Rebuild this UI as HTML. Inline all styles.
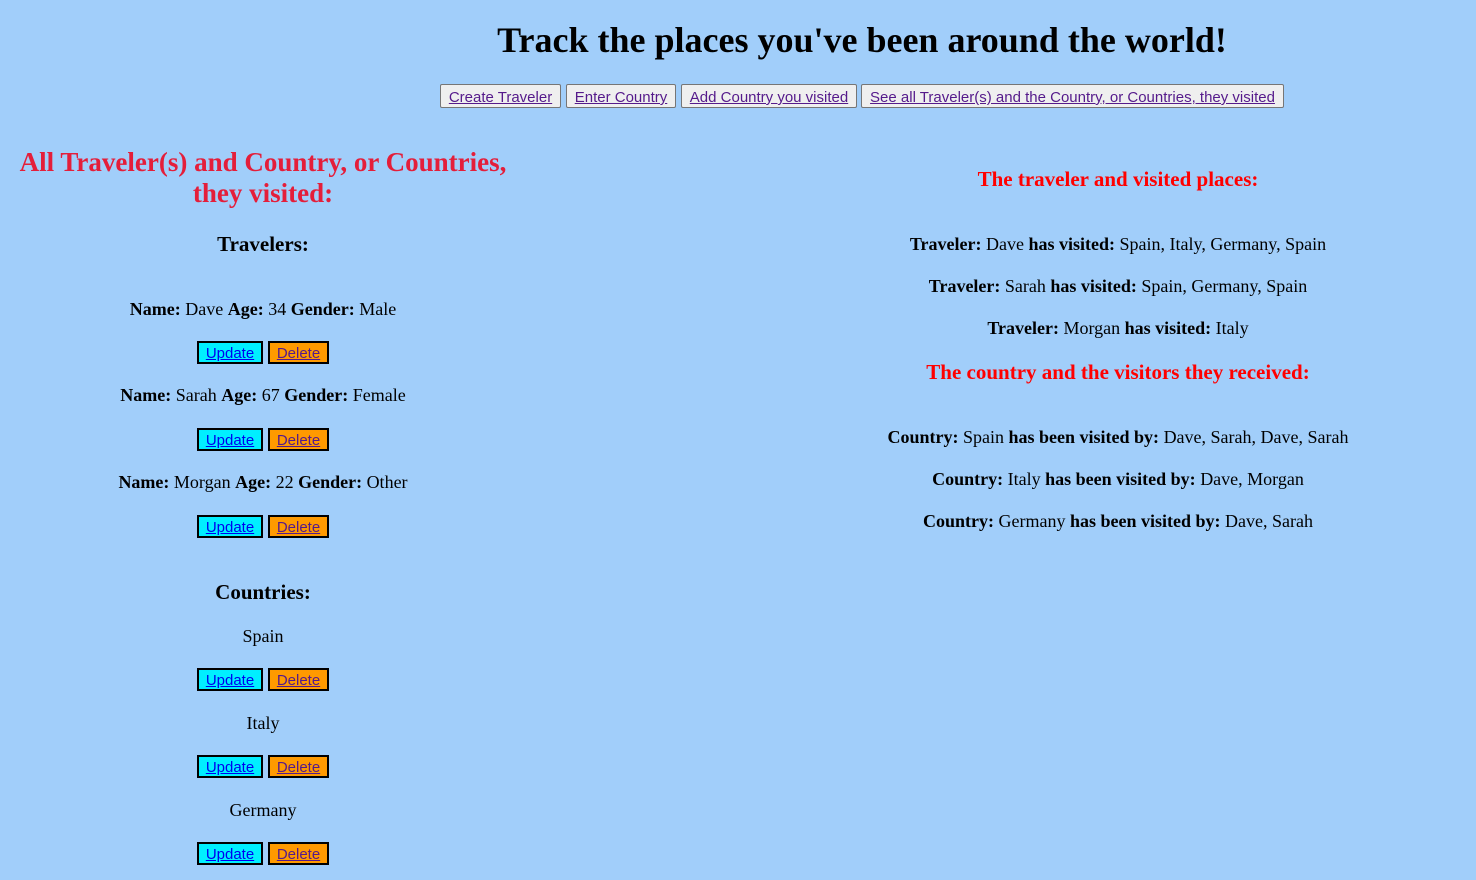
<!DOCTYPE html>
<html><head><meta charset="utf-8"><style>
html,body{margin:0;padding:0;width:1476px;height:880px;background:#a1cefa;overflow:hidden;font-family:"Liberation Serif",serif;color:#000}
.c{position:absolute;text-align:center;white-space:nowrap}
.L{left:0;width:526px}
.R{left:818px;width:600px}
.t17{font-size:18px;height:20px;line-height:20px}
.h20{font-size:21px;font-weight:bold;height:24px;line-height:24px}
.red{color:#ff0000}
.nav{position:absolute;top:84px;height:24px;box-sizing:border-box;border:1px solid #767676;background:#efefef;border-radius:2px;font-family:"Liberation Sans",sans-serif;font-size:15px;line-height:25px;text-align:center;color:#551a8b;text-decoration:underline}
.btns{position:absolute;left:197px;height:23px}
.b{position:absolute;top:0;height:23px;box-sizing:border-box;border:2px solid #000;font-family:"Liberation Sans",sans-serif;font-size:15px;line-height:21px;text-align:center;color:#0000ee;text-decoration:underline}
.u{left:0;width:66px;background:#00efff}
.d{left:71px;width:61px;background:#ff9a00;color:#551a8b}
</style></head><body>
<div class="c" style="left:462px;width:800px;top:18px;font-size:36px;font-weight:bold;line-height:44px">Track the places you've been around the world!</div>
<div class="nav" style="left:440px;width:121px">Create Traveler</div>
<div class="nav" style="left:566px;width:110px">Enter Country</div>
<div class="nav" style="left:681px;width:176px">Add Country you visited</div>
<div class="nav" style="left:861px;width:423px">See all Traveler(s) and the Country, or Countries, they visited</div>

<div class="c L" style="top:147px;font-size:27px;font-weight:bold;line-height:31px;color:#e41e3a">All Traveler(s) and Country, or Countries,<br>they visited:</div>
<div class="c L h20" style="top:232px">Travelers:</div>
<div class="c L t17" style="top:299px"><b>Name:</b> Dave <b>Age:</b> 34 <b>Gender:</b> Male</div>
<div class="btns" style="top:341px"><div class="b u">Update</div><div class="b d">Delete</div></div>
<div class="c L t17" style="top:385px"><b>Name:</b> Sarah <b>Age:</b> 67 <b>Gender:</b> Female</div>
<div class="btns" style="top:428px"><div class="b u">Update</div><div class="b d">Delete</div></div>
<div class="c L t17" style="top:472px"><b>Name:</b> Morgan <b>Age:</b> 22 <b>Gender:</b> Other</div>
<div class="btns" style="top:515px"><div class="b u">Update</div><div class="b d">Delete</div></div>
<div class="c L h20" style="top:580px">Countries:</div>
<div class="c L t17" style="top:626px">Spain</div>
<div class="btns" style="top:668px"><div class="b u">Update</div><div class="b d">Delete</div></div>
<div class="c L t17" style="top:713px">Italy</div>
<div class="btns" style="top:755px"><div class="b u">Update</div><div class="b d">Delete</div></div>
<div class="c L t17" style="top:800px">Germany</div>
<div class="btns" style="top:842px"><div class="b u">Update</div><div class="b d">Delete</div></div>

<div class="c R h20 red" style="top:167px">The traveler and visited places:</div>
<div class="c R t17" style="top:234px"><b>Traveler:</b> Dave <b>has visited:</b> Spain, Italy, Germany, Spain</div>
<div class="c R t17" style="top:276px"><b>Traveler:</b> Sarah <b>has visited:</b> Spain, Germany, Spain</div>
<div class="c R t17" style="top:318px"><b>Traveler:</b> Morgan <b>has visited:</b> Italy</div>
<div class="c R h20 red" style="top:360px">The country and the visitors they received:</div>
<div class="c R t17" style="top:427px"><b>Country:</b> Spain <b>has been visited by:</b> Dave, Sarah, Dave, Sarah</div>
<div class="c R t17" style="top:469px"><b>Country:</b> Italy <b>has been visited by:</b> Dave, Morgan</div>
<div class="c R t17" style="top:511px"><b>Country:</b> Germany <b>has been visited by:</b> Dave, Sarah</div>
</body></html>
